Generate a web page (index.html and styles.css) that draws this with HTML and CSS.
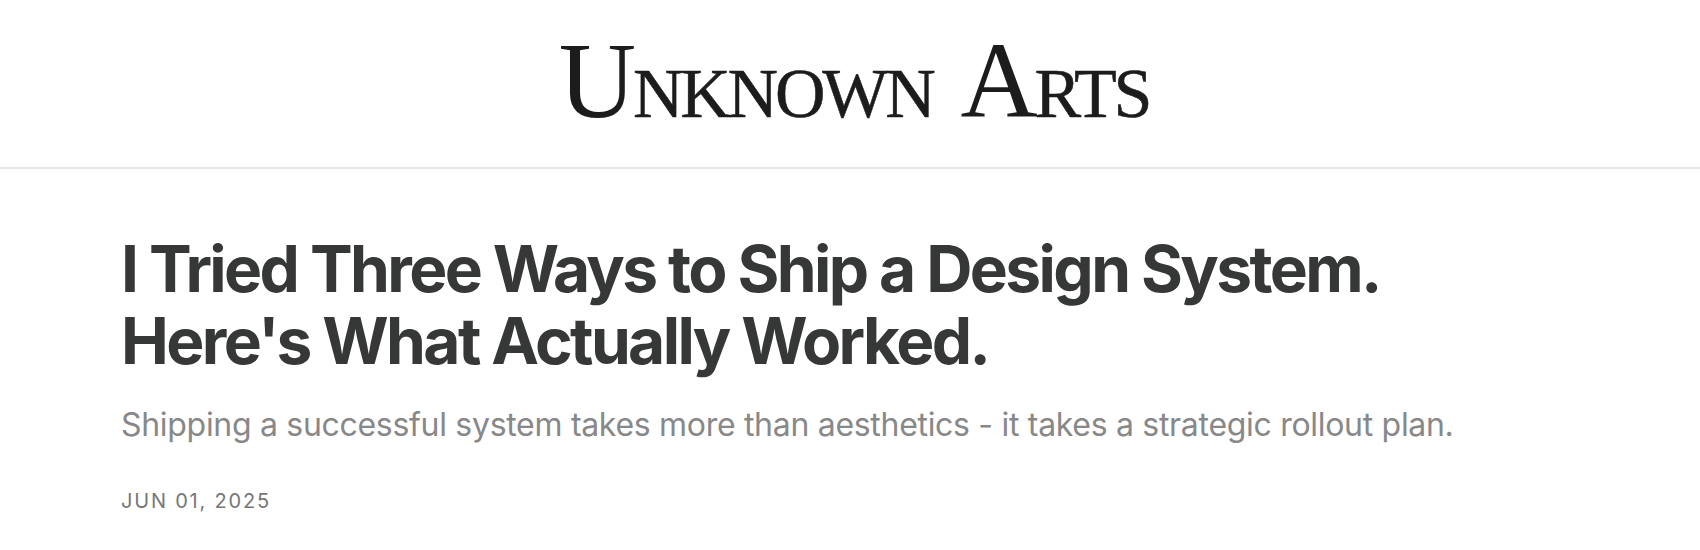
FILE: index.html
```html
<!DOCTYPE html>
<html lang="en">
<head>
<meta charset="utf-8">
<title>Unknown Arts</title>
<link rel="stylesheet" href="styles.css">
</head>
<body>
<header class="site-header">
  <a class="logo" href="#"><span class="big">U</span><span class="sc">NKNOWN</span><span class="gap"></span><span class="big">A</span><span class="sc">RTS</span></a>
</header>
<main class="post">
  <h1 class="title">I Tried Three Ways to Ship a Design System.<br>Here's What Actually Worked.</h1>
  <p class="subtitle">Shipping a successful system takes more than aesthetics - it takes a strategic rollout plan.</p>
  <div class="date">JUN 01, 2025</div>
</main>
</body>
</html>
```
FILE: styles.css
```css
html, body {
  margin: 0;
  padding: 0;
  background: #ffffff;
}
body {
  font-family: Inter, "Noto Sans", sans-serif;
}
.site-header {
  height: 167px;
  border-bottom: 2px solid #e6e6e6;
  display: flex;
  align-items: flex-start;
  justify-content: center;
  box-sizing: content-box;
}
.logo {
  display: flex;
  align-items: baseline;
  font-family: "Liberation Serif", "Times New Roman", serif;
  color: #1c1c1c;
  text-decoration: none;
  line-height: 1;
  margin-top: 28px;
  margin-left: 8px;
  white-space: nowrap;
  letter-spacing: -3.2px;
}
.logo .big {
  font-size: 107px;
}
.logo .sc {
  font-size: 70px;
  -webkit-text-stroke: 0.5px #1c1c1c;
}
.logo .gap {
  width: 28px;
}
.post {
  padding: 64px 120px 0 121px;
}
.title {
  margin: 0;
  font-family: Inter, sans-serif;
  font-weight: 700;
  font-size: 64px;
  line-height: 72px;
  color: #363737;
  letter-spacing: -2.6px;
}
.subtitle {
  margin: 28px 0 0;
  font-size: 32px;
  line-height: 40px;
  color: #888888;
  font-weight: 400;
  letter-spacing: -0.3px;
}
.date {
  margin-top: 44px;
  font-size: 20px;
  letter-spacing: 1.8px;
  color: #777777;
}
```
